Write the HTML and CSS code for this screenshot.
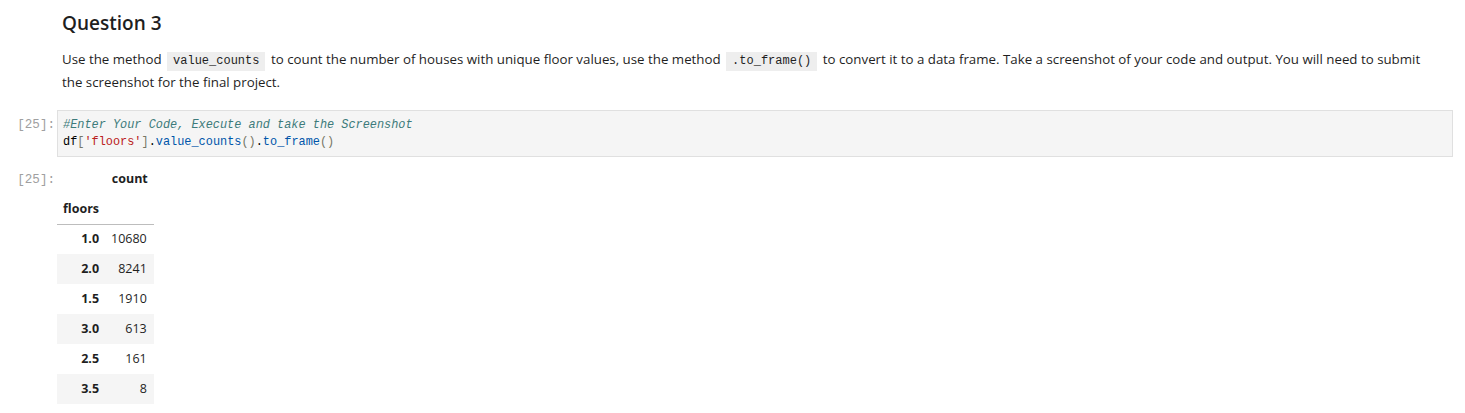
FILE: index.html
```html
<!DOCTYPE html>
<html>
<head>
<meta charset="utf-8">
<link rel="stylesheet" href="styles.css">
</head>
<body>
<div class="notebook">
  <div class="cell md-cell">
    <div class="prompt"></div>
    <div class="md">
      <h2 class="title">Question 3</h2>
      <p class="text"><span>Use the method</span> <code class="ic">value_counts</code> <span>to count the number of houses with unique floor values, use the method</span> <code class="ic">.to_frame()</code> <span>to convert it to a data frame. Take a screenshot of your code and output. You will need to submit the screenshot for the final project.</span></p>
    </div>
  </div>
  <div class="cell code-cell">
    <div class="prompt">[25]:</div>
    <div class="editor"><div class="line"><span class="cm">#Enter Your Code, Execute and take the Screenshot</span></div><div class="line"><span class="v">df</span><span class="br">[</span><span class="s">'floors'</span><span class="br">]</span>.<span class="p">value_counts</span><span class="br">()</span>.<span class="p">to_frame</span><span class="br">()</span></div></div>
  </div>
  <div class="cell out-cell">
    <div class="prompt out-prompt">[25]:</div>
    <div class="output">
      <table class="df">
        <thead>
          <tr><th></th><th>count</th></tr>
          <tr class="idxname"><th>floors</th><th></th></tr>
        </thead>
        <tbody>
          <tr><th>1.0</th><td>10680</td></tr>
          <tr><th>2.0</th><td>8241</td></tr>
          <tr><th>1.5</th><td>1910</td></tr>
          <tr><th>3.0</th><td>613</td></tr>
          <tr><th>2.5</th><td>161</td></tr>
          <tr><th>3.5</th><td>8</td></tr>
        </tbody>
      </table>
    </div>
  </div>
</div>
</body>
</html>
```
FILE: styles.css
```css
html, body {
  margin: 0;
  padding: 0;
  background: #ffffff;
}
body {
  font-family: "Open Sans", "Noto Sans", sans-serif;
  color: #1f1f1f;
}
.notebook {
  width: 1453px;
  display: flex;
  flex-direction: column;
}
.cell {
  display: flex;
  flex-direction: row;
}
.prompt {
  width: 57px;
  flex: none;
  font-family: "Liberation Mono", "DejaVu Sans Mono", monospace;
  font-size: 12.6px;
  color: #a0a0a0;
  text-align: right;
  padding-right: 2px;
  box-sizing: border-box;
  line-height: 17px;
}
.md {
  flex: 1;
  padding-left: 5px;
  padding-right: 16px;
}
.title {
  margin: 0;
  padding-top: 10px;
  font-size: 19px;
  font-weight: 600;
  line-height: 26px;
  color: #1f1f1f;
  height: 26px;
}
.text {
  margin: 12px 0 0 0;
  font-size: 13.3px;
  line-height: 23px;
  color: #1f1f1f;
}
.ic {
  display: inline-block;
  font-family: "Liberation Mono", "DejaVu Sans Mono", monospace;
  font-size: 12px;
  line-height: 19px;
  background: #eeeeee;
  padding: 0 6px;
  margin: 0 2px;
  color: #1f1f1f;
}
.code-cell {
  margin-top: 16px;
}
.code-cell .prompt {
  padding-top: 7px;
}
.editor {
  flex: 1;
  background: #f5f5f5;
  border: 1px solid #e0e0e0;
  padding: 6px 5px 5px 5px;
  font-family: "Liberation Mono", "DejaVu Sans Mono", monospace;
  font-size: 11.9px;
  line-height: 17px;
  color: #000000;
}
.line {
  white-space: pre;
}
.cm { color: #3d7b7b; font-style: italic; }
.s { color: #ba2121; }
.br { color: #777766; }
.p { color: #0055aa; }
.v { color: #000000; }
.out-cell {
  margin-top: 7px;
}
.out-prompt {
  padding-top: 8px;
}
.output {
  flex: 1;
  padding-left: 0;
}
.df {
  border-collapse: collapse;
  border-spacing: 0;
  font-family: "Open Sans", "Noto Sans", sans-serif;
  font-size: 12.5px;
  color: #1f1f1f;
}
.df th, .df td {
  height: 30px;
  padding: 0 6px;
  text-align: right;
  vertical-align: middle;
  box-sizing: border-box;
  line-height: 16px;
}
.df th {
  font-weight: 700;
}
.df td {
  font-weight: 400;
  padding-right: 7px;
}
.df thead tr.idxname th {
  border-bottom: 1px solid #bdbdbd;
  text-align: left;
}
.df tbody tr:nth-child(even) {
  background: #f5f5f5;
}
```
